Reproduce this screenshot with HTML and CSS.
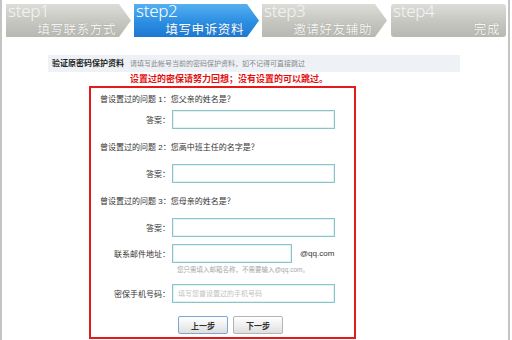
FILE: index.html
```html
<!DOCTYPE html>
<html lang="zh-CN">
<head>
  <meta charset="UTF-8">
  <meta name="viewport" content="width=device-width, initial-scale=1.0">
  <title>申诉 - 填写申诉资料</title>
  <link rel="stylesheet" href="styles.css">
</head>
<body>
  <div class="page">
    <div class="steps">
      <div class="step arrow">
        <span class="step-num">step1</span>
        <span class="step-name">填写联系方式</span>
      </div>
      <div class="step arrow current">
        <span class="step-num">step2</span>
        <span class="step-name">填写申诉资料</span>
      </div>
      <div class="step arrow">
        <span class="step-num">step3</span>
        <span class="step-name">邀请好友辅助</span>
      </div>
      <div class="step last">
        <span class="step-num">step4</span>
        <span class="step-name">完成</span>
      </div>
    </div>

    <div class="section-head">
      <strong>验证原密码保护资料</strong>
      <span>请填写此帐号当前的密码保护资料，如不记得可直接跳过</span>
    </div>

    <p class="notice">设置过的密保请努力回想；没有设置的可以跳过。</p>

    <form class="form-box">
      <p class="question first">曾设置过的问题 1：您父亲的姓名是？</p>
      <div class="field">
        <label>答案：</label>
        <input type="text" class="text-input">
      </div>

      <p class="question">曾设置过的问题 2：您高中班主任的名字是？</p>
      <div class="field">
        <label>答案：</label>
        <input type="text" class="text-input">
      </div>

      <p class="question">曾设置过的问题 3：您母亲的姓名是？</p>
      <div class="field">
        <label>答案：</label>
        <input type="text" class="text-input">
      </div>

      <div class="field email">
        <label>联系邮件地址：</label>
        <input type="text" class="text-input short">
        <span class="suffix">@qq.com</span>
      </div>
      <p class="hint">您只需填入邮箱名称，不需要输入@qq.com。</p>

      <div class="field phone">
        <label>密保手机号码：</label>
        <input type="text" class="text-input" placeholder="填写您曾设置过的手机号码">
      </div>

      <div class="buttons">
        <button type="button" class="btn focused">上一步</button>
        <button type="button" class="btn">下一步</button>
      </div>
    </form>
  </div>
</body>
</html>
```

FILE: styles.css
```css
body {
  margin: 0;
  padding: 0;
  background-color: #fff;
  color: #333;
  font-family: "Liberation Sans", "Noto Sans CJK SC", sans-serif;
}

.page {
  width: 506px;
  height: 340px;
  border-left: 2px solid #c4c4c4;
  border-right: 2px solid #c4c4c4;
  overflow: hidden;
}

/* step bar */
.steps {
  display: flex;
  margin: 4px 0 0 4px;
  gap: 3px;
}

.step {
  width: 125px;
  height: 33px;
  position: relative;
  background: linear-gradient(#dcdcd8, #c6c6c1 55%, #b8b8b3);
  color: #f4f4f2;
  box-sizing: border-box;
  padding: 0 0 0 2px;
}

.step.arrow {
  padding-right: 15px;
  clip-path: polygon(0 0, calc(100% - 12px) 0, 100% 50%, calc(100% - 12px) 100%, 0 100%);
}

.step.current {
  background: linear-gradient(#55b0f0, #2b8ee2 55%, #1d78d2);
  color: #fff;
}

.step.last {
  width: 115px;
  margin-left: 1px;
  border-radius: 3px;
  padding-right: 6px;
}

.step-num {
  display: block;
  font-family: "Noto Sans", sans-serif;
  font-weight: 300;
  font-size: 17px;
  line-height: 15px;
  letter-spacing: -0.3px;
  margin-top: -1px;
}

.step-name {
  display: block;
  text-align: right;
  font-family: "Noto Sans CJK SC", sans-serif;
  font-size: 12.5px;
  line-height: 14px;
  letter-spacing: 0.6px;
  margin-top: 4px;
  text-shadow: 0 0 1px rgba(0, 0, 0, 0.25);
}

/* section header */
.section-head {
  margin: 18px 0 0 46px;
  width: 408px;
  height: 17px;
  line-height: 17px;
  padding-left: 4px;
  background-color: #eef2f7;
  font-size: 7px;
  color: #888;
}

.section-head strong {
  font-size: 8px;
  color: #222;
  margin-right: 4px;
}

.notice {
  margin: 1px 0 0 128px;
  font-size: 9px;
  line-height: 13px;
  font-weight: bold;
  color: #e41010;
}

/* form box */
.form-box {
  margin: 0 0 0 87px;
  width: 263px;
  border: 2px solid #e51a1a;
  padding: 0 0 3px 0;
  font-size: 8px;
}

.question {
  margin: 11px 0 0 0;
  padding-left: 9px;
  height: 16px;
  line-height: 16px;
}

.question.first {
  margin-top: 4px;
}

.field {
  display: flex;
  align-items: center;
  margin-top: 8px;
}

.question.first + .field {
  margin-top: 2px;
}

.field label {
  width: 79px;
  text-align: right;
  margin-right: 2px;
}

.field.email {
  margin-top: 7px;
}

.text-input {
  width: 163px;
  height: 19px;
  box-sizing: border-box;
  border: 1px solid #88c4ca;
  box-shadow: inset 0 0 0 1px #e2f1f2;
  padding: 0 5px;
  font-size: 7px;
  font-family: inherit;
  outline: none;
}

.text-input.short {
  width: 120px;
}

.text-input::placeholder {
  color: #c2c2c2;
}

.suffix {
  margin-left: 8px;
  font-family: "Liberation Sans", sans-serif;
}

.hint {
  margin: 1px 0 0 86px;
  height: 12px;
  line-height: 12px;
  font-size: 6.5px;
  color: #a8a8a8;
}

.field.phone {
  margin-top: 8px;
}

.buttons {
  display: flex;
  gap: 5px;
  margin: 13px 0 0 87px;
}

.btn {
  width: 50px;
  height: 18px;
  padding: 0;
  border: 1px solid #b4b4b4;
  border-radius: 2px;
  background: linear-gradient(#ffffff, #f0f0f0 50%, #dedede);
  font-family: inherit;
  font-size: 8px;
  font-weight: bold;
  color: #333;
}

.btn.focused {
  border-color: #7aa8d6;
}
```
